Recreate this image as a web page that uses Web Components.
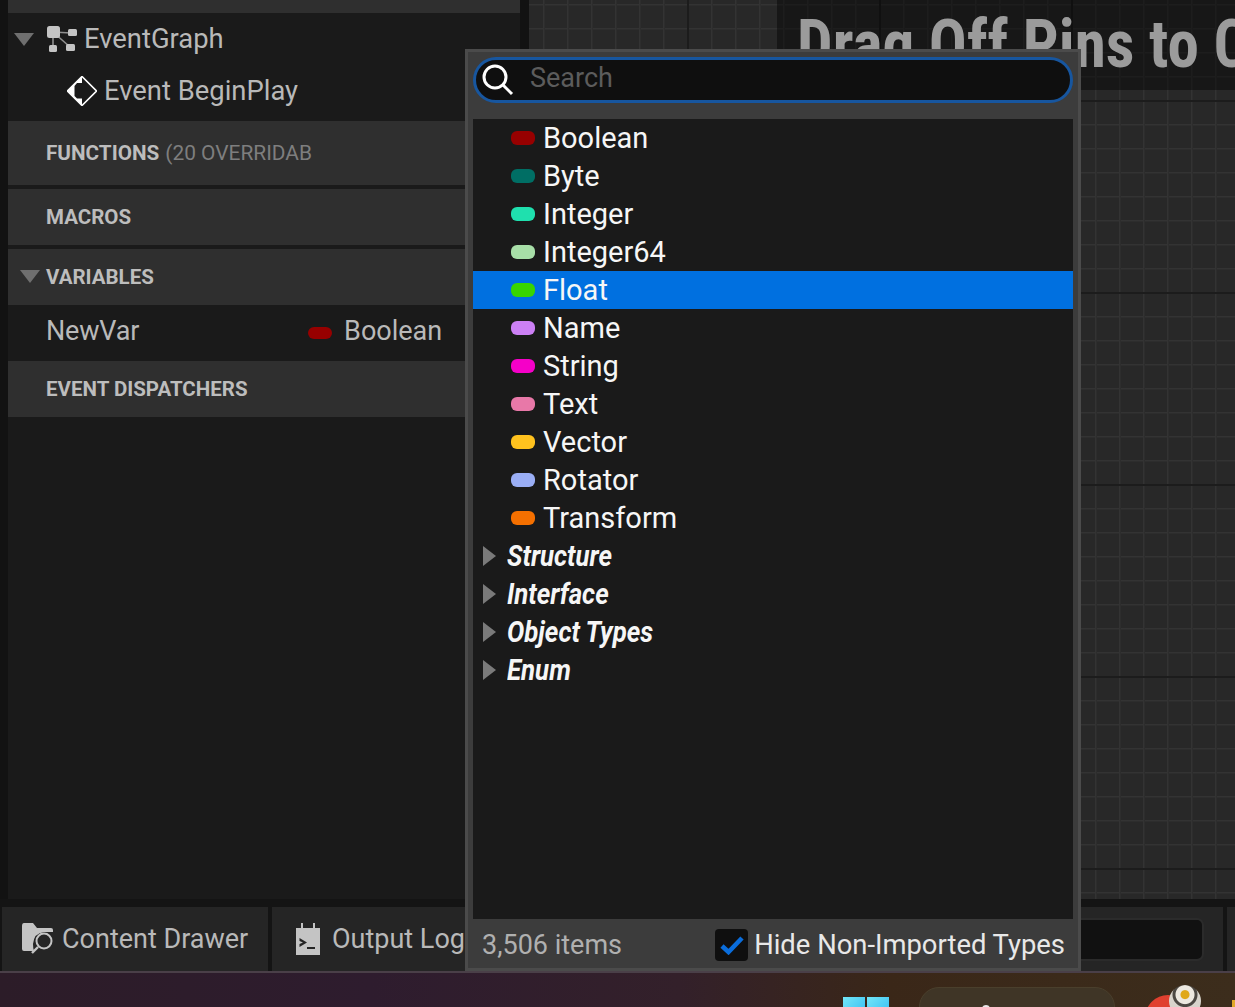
<!DOCTYPE html>
<html>
<head>
<meta charset="utf-8">
<title>Blueprint Editor</title>
<style>
    html, body { margin: 0; height: 1007px; overflow: hidden; background: #121212; }
    body { font-family: Roboto, "Liberation Sans", sans-serif; }
</style>
</head>
<body>
<ue-editor>
    <ue-my-blueprint slot="left">
        <ue-tree-row kind="graph">EventGraph</ue-tree-row>
        <ue-tree-row kind="event">Event BeginPlay</ue-tree-row>
    </ue-my-blueprint>
    <ue-graph-canvas slot="graph" title-text="Drag Off Pins to C"></ue-graph-canvas>
    <ue-bottom-bar slot="bottom"></ue-bottom-bar>
    <ue-taskbar slot="taskbar"></ue-taskbar>
    <ue-type-picker slot="popup">
        <ue-type-row color="#970000">Boolean</ue-type-row>
        <ue-type-row color="#006e64">Byte</ue-type-row>
        <ue-type-row color="#1fe0ae">Integer</ue-type-row>
        <ue-type-row color="#a8dfa8">Integer64</ue-type-row>
        <ue-type-row color="#38d500" selected>Float</ue-type-row>
        <ue-type-row color="#cc80f5">Name</ue-type-row>
        <ue-type-row color="#f500c8">String</ue-type-row>
        <ue-type-row color="#e878a8">Text</ue-type-row>
        <ue-type-row color="#ffc21e">Vector</ue-type-row>
        <ue-type-row color="#9aaef5">Rotator</ue-type-row>
        <ue-type-row color="#f57000">Transform</ue-type-row>
        <ue-category-row>Structure</ue-category-row>
        <ue-category-row>Interface</ue-category-row>
        <ue-category-row>Object Types</ue-category-row>
        <ue-category-row>Enum</ue-category-row>
    </ue-type-picker>
</ue-editor>

<script>
// Small helper so every component sets up its open shadow root the same way
class UeElement extends HTMLElement {
    constructor() {
        super();
        this.attachShadow({ mode: 'open' });
    }
    connectedCallback() {
        this.shadowRoot.innerHTML = this.render();
    }
}

// Page frame: editor area, bottom bar, windows taskbar, popup on top
class UeEditor extends UeElement {
    render() {
        return `
        <style>
            :host { display: flex; flex-direction: column; position: relative; width: 1235px; height: 1007px; background: #121212; overflow: hidden; }
            .main { display: flex; height: 899px; padding-left: 8px; gap: 9px; }
            .popup { position: absolute; left: 465px; top: 49px; }
        </style>
        <div class="main">
            <slot name="left"></slot>
            <slot name="graph"></slot>
        </div>
        <slot name="bottom"></slot>
        <slot name="taskbar"></slot>
        <div class="popup"><slot name="popup"></slot></div>
        `;
    }
}

// Left column of the blueprint editor
class UeMyBlueprint extends UeElement {
    render() {
        return `
        <style>
            :host { display: flex; flex-direction: column; width: 512px; background: #1a1a1a; color: #b9b9b9; }
            .top { height: 13px; background: #2f2f2f; }
            .tree { height: 108px; display: flex; flex-direction: column; }
            .section { display: flex; align-items: center; padding-left: 38px; background: #2f2f2f; font-size: 20.5px; font-weight: 700; color: #bdbdbd; position: relative; }
            .section span { font-weight: 400; color: #7e7e7e; margin-left: 6px; font-size: 20.9px; }
            .gap { margin-top: 4px; }
            .tri { position: absolute; left: 12px; top: 21px; }
            .var { height: 56px; display: flex; align-items: center; padding-left: 38px; font-size: 27px; }
            .var span { margin-top: -4px; }
            .var .name { letter-spacing: -0.2px; }
            .pin { width: 24px; height: 12px; border-radius: 6px; background: #970000; margin-left: 169px; margin-right: 12px; }
        </style>
        <div class="top"></div>
        <div class="tree"><slot></slot></div>
        <div class="section" style="height:64px;font-size:20.7px">FUNCTIONS<span>(20 OVERRIDAB</span></div>
        <div class="section gap" style="height:56px">MACROS</div>
        <div class="section gap" style="height:56px">
            <svg class="tri" width="20" height="13" viewBox="0 0 20 13"><path d="M0 0H20L10 13Z" fill="#6f6f6f"/></svg>
            VARIABLES
        </div>
        <div class="var"><span class="name">NewVar</span><div class="pin"></div><span>Boolean</span></div>
        <div class="section" style="height:56px">EVENT DISPATCHERS</div>
        `;
    }
}

class UeTreeRow extends UeElement {
    render() {
        const graphIcon = `
            <svg class="tri" width="20" height="13" viewBox="0 0 20 13"><path d="M0 0H20L10 13Z" fill="#6f6f6f"/></svg>
            <svg class="ico" style="margin-left:39px;margin-right:7px" width="30" height="27" viewBox="0 0 30 27">
                <path d="M6 6L6 22M6 6L24 7M6 6L23 21" stroke="#8f8f8f" stroke-width="1.6" fill="none"/>
                <rect x="0" y="0" width="13" height="12" rx="2.5" fill="#c4c4c4"/>
                <rect x="21" y="3" width="9" height="7" rx="1.5" fill="#c4c4c4"/>
                <rect x="2" y="19" width="8" height="7" rx="1.5" fill="#c4c4c4"/>
                <rect x="19" y="18" width="9" height="7" rx="1.5" fill="#c4c4c4"/>
            </svg>`;
        const eventIcon = `
            <svg class="ico" style="margin-left:59px;margin-right:7px" width="30" height="30" viewBox="0 0 30 30">
                <path d="M15 0.5L29.5 15L15 29.5L0.5 15Z" fill="#1a1a1a" stroke="#fff" stroke-width="1.6" stroke-linejoin="round"/>
                <path d="M15 0.5L0.5 15L15 29.5Z" fill="#fff"/>
                <path d="M15 7H10L7.5 10V20L10 22.5H15Z" fill="#1a1a1a"/>
            </svg>`;
        return `
        <style>
            :host { display: flex; align-items: center; height: 52px; font-size: 27.4px; color: #b9b9b9; position: relative; }
            .tri { position: absolute; left: 6px; top: 20px; }
            .ico { flex: none; }
        </style>
        ${this.getAttribute('kind') === 'graph' ? graphIcon : eventIcon}
        <slot></slot>
        `;
    }
}

// Blueprint grid with the comment banner
class UeGraphCanvas extends UeElement {
    render() {
        const title = this.getAttribute('title-text') || '';
        return `
        <style>
            :host {
                display: block; flex: 1; position: relative; overflow: hidden;
                background-color: #282828;
                background-image:
                    linear-gradient(90deg, #1c1c1c 2px, transparent 2px),
                    linear-gradient(#1c1c1c 2px, transparent 2px),
                    linear-gradient(90deg, #333 1px, #2d2d2d 1px, #2d2d2d 2px, transparent 2px),
                    linear-gradient(#333 1px, #2d2d2d 1px, #2d2d2d 2px, transparent 2px);
                background-size: 192px 100%, 100% 192px, 24px 100%, 100% 24px;
                background-position: 158px 0, 0 100px, 14px 0, 0 4px;
            }
            .banner { position: absolute; left: 248px; right: 0; top: 0; height: 90px; background: rgba(0,0,0,.42); overflow: hidden; }
            .title { position: absolute; left: 20px; top: 2px; font-size: 66px; line-height: 86px; font-weight: 700; color: #9b9b9b; white-space: nowrap; font-stretch: 75%; transform: scaleX(.957); transform-origin: left top; }
        </style>
        <div class="banner"><div class="title">${title}</div></div>
        `;
    }
}

class UeBottomBar extends UeElement {
    render() {
        return `
        <style>
            :host { display: flex; height: 72px; background: #141414; padding: 8px 0 0 2px; box-sizing: border-box; gap: 4px; color: #b9b9b9; font-size: 27px; }
            .tab { background: #252525; display: flex; align-items: center; height: 64px; box-sizing: border-box; }
            .content { width: 266px; padding-left: 20px; gap: 8px; }
            .log { width: 500px; padding-left: 24px; gap: 12px; }
            .right { margin-left: auto; width: 142px; padding-right: 19px; }
            .input { flex: 1; height: 43px; margin-left: -20px; background: #111; border: 2px solid #2b2b2b; border-radius: 7px; box-sizing: border-box; }
            .end { width: 8px; }
        </style>
        <div class="tab content">
            <svg width="32" height="32" viewBox="0 0 32 32">
                <path d="M0 3Q0 0 2 0H11L15 5H29Q31 5 31 7V9H22Q12 10 11 21Q11 25 12 28H2Q0 28 0 26Z" fill="#c4c4c4"/>
                <circle cx="22" cy="18" r="7.5" fill="none" stroke="#c4c4c4" stroke-width="2"/>
                <path d="M16 24L10 30" stroke="#c4c4c4" stroke-width="2.4"/>
            </svg>
            Content Drawer
        </div>
        <div class="tab log">
            <svg width="24" height="32" viewBox="0 0 24 32">
                <path d="M0 5H5V0H7V5H17V0H19V5H24V32H0Z" fill="#c4c4c4"/>
                <path d="M3.5 15L11 19.5L3.5 24V21L7 19.5L3.5 18Z" fill="#252525"/>
                <rect x="11" y="24" width="8" height="2" fill="#252525"/>
            </svg>
            Output Log
        </div>
        <div class="tab right"><div class="input"></div></div>
        <div class="tab end"></div>
        `;
    }
}

// Windows taskbar peeking in at the bottom edge
class UeTaskbar extends UeElement {
    render() {
        return `
        <style>
            :host { display: block; height: 36px; position: relative; overflow: hidden; box-sizing: border-box; border-top: 2px solid #4a3f48; background: linear-gradient(90deg, #2c1c28 0%, #2e1c2e 30%, #33202a 55%, #3a2718 72%, #3c2d1c 100%); }
            .win { position: absolute; left: 843px; top: 24px; display: grid; grid-template-columns: 22px 22px; gap: 2px; }
            .win i { display: block; height: 24px; background: linear-gradient(135deg, #72e6f8, #2fb8f2); }
            .search { position: absolute; left: 919px; top: 14px; width: 196px; height: 40px; border-radius: 20px; background: #3f3526; border: 1px solid #4a3f2c; box-sizing: border-box; }
            .dot { position: absolute; left: 982px; top: 32px; width: 8px; height: 8px; border-radius: 50%; background: #e8e8e8; }
            .red { position: absolute; left: 1145px; top: 22px; width: 46px; height: 46px; border-radius: 50%; background: #e0402f; }
            .badge { position: absolute; left: 1169px; top: 12px; width: 32px; height: 32px; border-radius: 50%; background: radial-gradient(circle at 50% 30%, #e0a818 0 4px, #ece8e0 5px 9px, #4c4843 10px 12px, #d8d4cc 13px 18px); }
            .yellow { position: absolute; left: 1232px; top: 27px; width: 10px; height: 20px; background: #e3a92a; }
        </style>
        <div class="win"><i></i><i></i></div>
        <div class="search"></div>
        <div class="dot"></div>
        <div class="red"></div>
        <div class="badge"></div>
        <div class="yellow"></div>
        `;
    }
}

// The pin type dropdown
class UeTypePicker extends UeElement {
    render() {
        return `
        <style>
            :host { display: flex; flex-direction: column; width: 616px; height: 922px; box-sizing: border-box; padding: 5px 5px 0; background: #3c3c3c; border: 3px solid #4b4b4b; }
            .search { display: flex; align-items: center; height: 46px; box-sizing: border-box; border: 3px solid #17569f; border-radius: 23px; background: #0f0f0f; color: #5c5c5c; font-size: 27px; padding-left: 6px; gap: 16px; }
            .search span { margin-top: -4px; }
            .list { flex: 1; margin-top: 16px; background: #1a1a1a; display: flex; flex-direction: column; }
            .foot { height: 49px; display: flex; align-items: center; font-size: 27px; color: #b0b0b0; padding: 2px 8px 0 9px; box-sizing: border-box; flex: none; }
            .check { margin-left: auto; margin-right: 6px; width: 33px; height: 32px; border-radius: 4px; background: #0f0f0f; display: flex; align-items: center; justify-content: center; }
            .hide { color: #e8e8e8; font-size: 27.4px; }
        </style>
        <div class="search">
            <svg width="32" height="32" viewBox="0 0 32 32">
                <circle cx="13" cy="13" r="11" fill="none" stroke="#fff" stroke-width="3"/>
                <path d="M21 21L30 30" stroke="#fff" stroke-width="3"/>
            </svg>
            <span>Search</span>
        </div>
        <div class="list"><slot></slot></div>
        <div class="foot">
            3,506 items
            <div class="check">
                <svg width="24" height="20" viewBox="0 0 24 20"><path d="M2 11L8.5 17L22 3" fill="none" stroke="#0a6ddc" stroke-width="4.6"/></svg>
            </div>
            <span class="hide">Hide Non-Imported Types</span>
        </div>
        `;
    }
}

class UeTypeRow extends UeElement {
    render() {
        const color = this.getAttribute('color') || '#888';
        const bg = this.hasAttribute('selected') ? '#0070e0' : 'transparent';
        return `
        <style>
            :host { display: flex; align-items: center; height: 38px; padding-left: 38px; gap: 8px; color: #f6f6f6; font-size: 29px; background: ${bg}; }
            .pin { width: 24px; height: 14px; border-radius: 6px; background: ${color}; }
            .label { margin-top: -1px; }
        </style>
        <div class="pin"></div><span class="label"><slot></slot></span>
        `;
    }
}

class UeCategoryRow extends UeElement {
    render() {
        return `
        <style>
            :host { display: flex; align-items: center; height: 38px; padding-left: 10px; gap: 11px; color: #f6f6f6; font-size: 29.5px; font-weight: 700; font-style: italic; }
            .label { display: inline-block; transform: scaleX(.875); transform-origin: left center; white-space: nowrap; margin-top: -1px; }
        </style>
        <svg width="13" height="20" viewBox="0 0 13 20"><path d="M0 0L13 10L0 20Z" fill="#7a7a7a"/></svg>
        <span class="label"><slot></slot></span>
        `;
    }
}

customElements.define('ue-editor', UeEditor);
customElements.define('ue-my-blueprint', UeMyBlueprint);
customElements.define('ue-tree-row', UeTreeRow);
customElements.define('ue-graph-canvas', UeGraphCanvas);
customElements.define('ue-bottom-bar', UeBottomBar);
customElements.define('ue-taskbar', UeTaskbar);
customElements.define('ue-type-picker', UeTypePicker);
customElements.define('ue-type-row', UeTypeRow);
customElements.define('ue-category-row', UeCategoryRow);
</script>
</body>
</html>
